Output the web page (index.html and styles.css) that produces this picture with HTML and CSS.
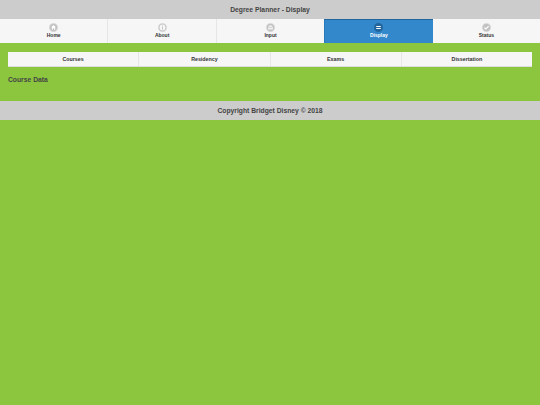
FILE: index.html
```html
<!DOCTYPE html>
<html>

<head>
    <meta charset="UTF-8">
    <title>Degree Planner - Display</title>
    <link rel="stylesheet" href="styles.css">
</head>

<body>
    <header class="bar bar_header">Degree Planner - Display</header>
    <nav class="navbar">
        <a class="nav_item">
            <svg class="nav_icon" viewBox="0 0 12 12">
                <circle cx="6" cy="6" r="5.5" fill="#c2c2c2" stroke="#dadada"/>
                <path d="M6 2.6 9.2 5.8H8.2V9H6.8V7H5.2V9H3.8V5.8H2.8Z" fill="#fff"/>
            </svg>
            <span>Home</span>
        </a>
        <a class="nav_item">
            <svg class="nav_icon" viewBox="0 0 12 12">
                <circle cx="6" cy="6" r="5.5" fill="#c2c2c2" stroke="#dadada"/>
                <circle cx="6" cy="6" r="3.9" fill="#f6f6f6"/>
                <path d="M5.5 3.2h1v1h-1ZM5.5 5h1v3.6h-1Z" fill="#b5b5b5"/>
            </svg>
            <span>About</span>
        </a>
        <a class="nav_item">
            <svg class="nav_icon" viewBox="0 0 12 12">
                <circle cx="6" cy="6" r="5.5" fill="#c2c2c2" stroke="#dadada"/>
                <path d="M2.8 5.2 4.2 3.4H7.8L9.2 5.2V8.8H2.8Z" fill="#f2f2f2"/>
                <path d="M2.8 5.4H4.8L5.4 6.4H6.6L7.2 5.4H9.2" fill="none" stroke="#b5b5b5" stroke-width=".7"/>
            </svg>
            <span>Input</span>
        </a>
        <a class="nav_item nav_item_active">
            <svg class="nav_icon" viewBox="0 0 12 12">
                <circle cx="6" cy="6" r="6" fill="#22659c"/>
                <path d="M3 3.9H9V5.3H3ZM3 6.7H9V8.1H3Z" fill="#fff"/>
            </svg>
            <span>Display</span>
        </a>
        <a class="nav_item">
            <svg class="nav_icon" viewBox="0 0 12 12">
                <circle cx="6" cy="6" r="5.5" fill="#c2c2c2" stroke="#dadada"/>
                <path d="M3.1 6.1 5.1 8 8.9 4.2" fill="none" stroke="#fff" stroke-width="1.5"/>
            </svg>
            <span>Status</span>
        </a>
    </nav>

    <main class="content">
        <div class="tabs">
            <a class="tab">Courses</a>
            <a class="tab">Residency</a>
            <a class="tab">Exams</a>
            <a class="tab">Dissertation</a>
        </div>
        <h3 class="section_title">Course Data</h3>
    </main>

    <footer class="bar bar_footer">Copyright Bridget Disney © 2018</footer>
</body>

</html>
```

FILE: styles.css
```css
html,
body {
    margin: 0;
    padding: 0;
    height: 100%;
    background: #8cc63f;
    font-family: "Liberation Sans", Arial, sans-serif;
    color: #333333;
    overflow: hidden;
}

.bar {
    display: flex;
    justify-content: center;
    align-items: center;
    background: #cccccc;
    font-weight: bold;
    font-size: 6.75px;
    color: #444444;
}

.bar_header {
    height: 19px;
}

.bar_footer {
    height: 19px;
}

.navbar {
    display: flex;
    height: 24px;
    background: #f6f6f6;
}

.nav_item {
    flex: 1;
    display: flex;
    flex-direction: column;
    align-items: center;
    box-sizing: border-box;
    padding-top: 4px;
    border-left: 1px solid #e6e6e6;
    font-size: 5px;
    font-weight: bold;
    color: #333333;
}

.nav_item:first-child {
    border-left: 0;
}

.nav_item span {
    line-height: 7px;
}

.nav_icon {
    width: 9px;
    height: 9px;
    display: block;
}

.nav_item_active {
    background: #3388cc;
    border-top: 1px solid #22659c;
    border-left: 1px solid #2a78b8;
    color: #ffffff;
    padding-top: 3px;
}

.nav_item_active + .nav_item {
    border-left: 0;
}

.content {
    box-sizing: border-box;
    height: 58px;
    padding: 9px 8px 0;
}

.tabs {
    display: flex;
    height: 15px;
    background: #f6f6f6;
    border-bottom: 1px solid #dddddd;
    box-sizing: border-box;
}

.tab {
    flex: 1;
    display: flex;
    justify-content: center;
    align-items: center;
    border-left: 1px solid #e6e6e6;
    font-size: 5.3px;
    font-weight: bold;
}

.tab:first-child {
    border-left: 0;
}

.section_title {
    margin: 8px 0 0;
    font-size: 6.75px;
    line-height: 9px;
    font-weight: bold;
    color: #444444;
}
```
